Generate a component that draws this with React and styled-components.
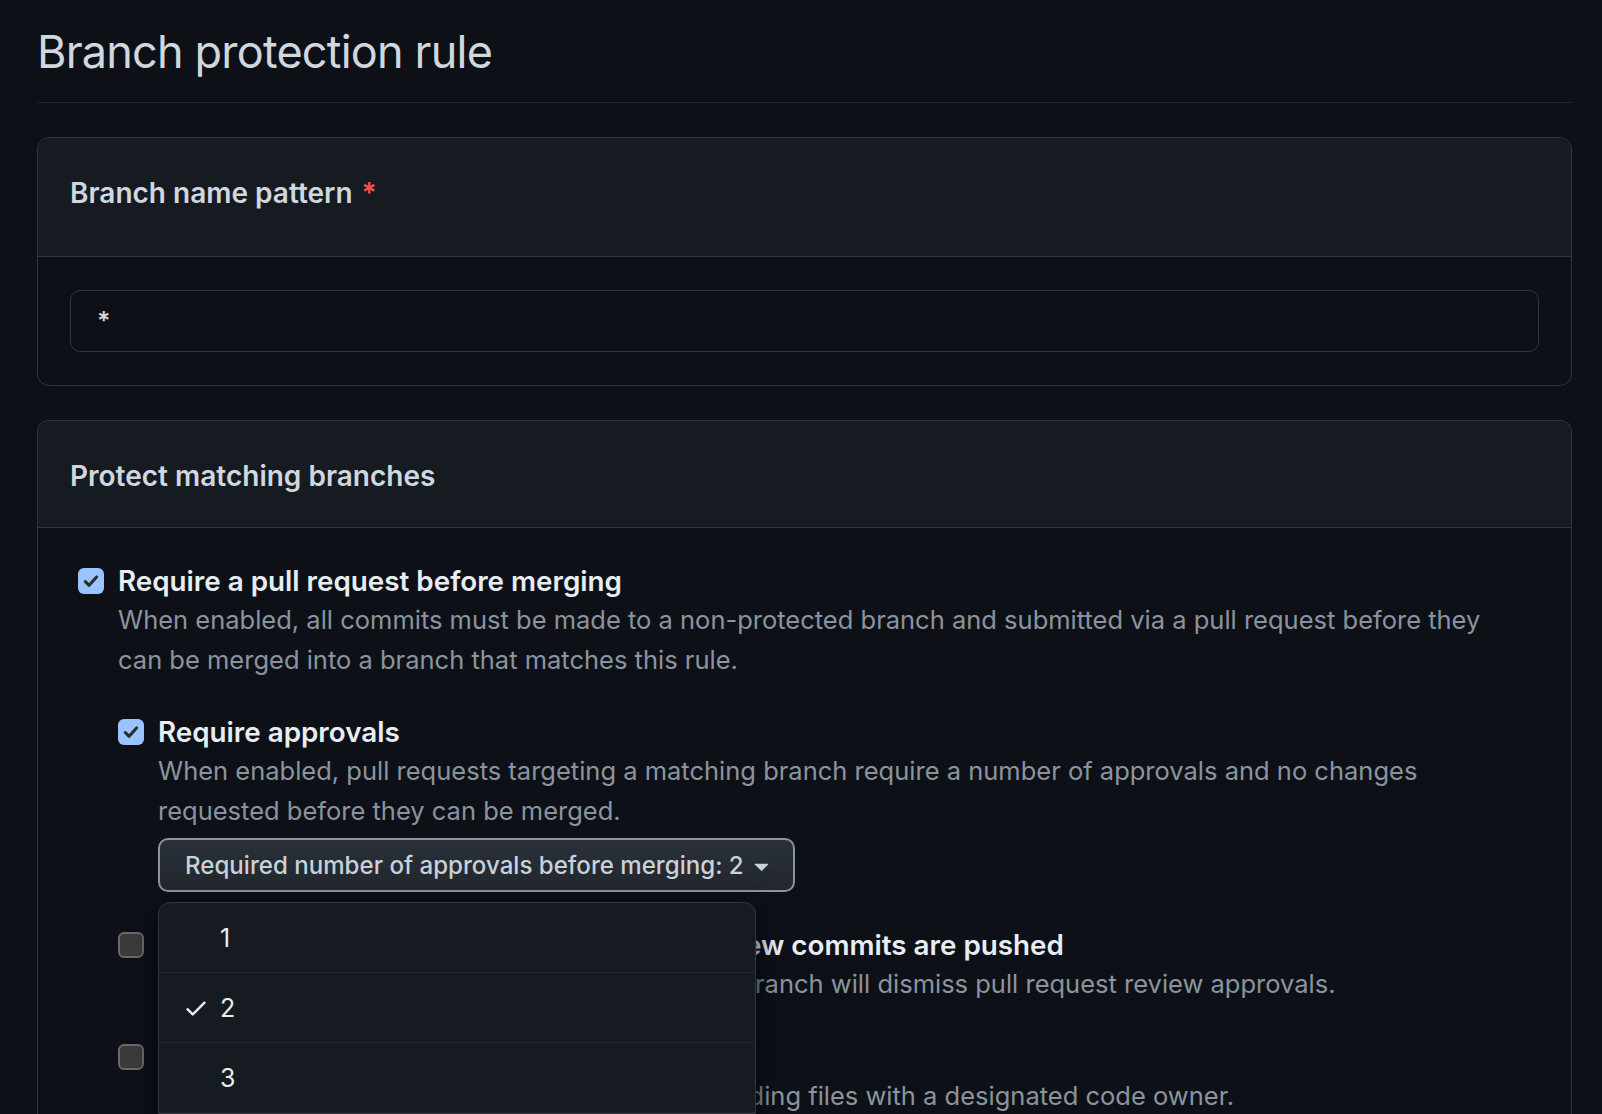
import styled, { createGlobalStyle } from "styled-components";

const GlobalStyle = createGlobalStyle`
  html, body {
    margin: 0;
    padding: 0;
    background: #0d1117;
  }
  body {
    font-family: Inter, "Noto Sans", "Liberation Sans", sans-serif;
    color: #c9d1d9;
    overflow: hidden;
  }
  * { box-sizing: border-box; }
`;

const Page = styled.div`
  width: 1602px;
  height: 1114px;
  padding: 22px 30px 0 37px;
  overflow: hidden;
`;

const Subhead = styled.div`
  padding-bottom: 20px;
  border-bottom: 1px solid #21262d;
  margin-bottom: 34px;
`;

const Title = styled.h1`
  margin: 0;
  font-size: 45px;
  line-height: 60px;
  font-weight: 400;
  letter-spacing: -0.8px;
  color: #d0d7de;
`;

const Box = styled.section`
  border: 1px solid #30363d;
  border-radius: 12px;
  margin-bottom: 34px;
  position: relative;
  ${(p) => p.$open && "border-bottom: none; border-bottom-left-radius: 0; border-bottom-right-radius: 0;"}
`;

const BoxHeader = styled.div`
  height: ${(p) => p.$height}px;
  padding: 0 32px 0 32px;
  padding-top: ${(p) => p.$top}px;
  background: #161b22;
  border-bottom: 1px solid #30363d;
  border-radius: 12px 12px 0 0;
`;

const BoxTitle = styled.h2`
  margin: 0;
  font-size: 28px;
  line-height: 40px;
  font-weight: 600;
  color: #d0d7de;
`;

const Required = styled.span`
  color: #f85149;
  margin-left: 9px;
`;

const BoxBody = styled.div`
  padding: ${(p) => p.$pad || "33px 32px"};
`;

const TextInput = styled.div`
  height: 62px;
  border: 1px solid #30363d;
  border-radius: 10px;
  background: #0d1117;
  padding: 0 26px;
  display: flex;
  align-items: center;
  font-size: 25px;
  font-weight: 600;
  color: #d0d7de;
`;

const Item = styled.div`
  display: flex;
  gap: 14px;
  margin-top: ${(p) => p.$gap || 0}px;
`;

const Check = styled.span`
  flex: 0 0 26px;
  width: 26px;
  height: 26px;
  margin-top: 8px;
  border-radius: 6px;
  display: flex;
  align-items: center;
  justify-content: center;
  background: ${(p) => (p.$on ? "#99c4ff" : "#3b3b3b")};
  border: ${(p) => (p.$on ? "none" : "2px solid #6a6a6a")};
`;

const ItemBody = styled.div`
  flex: 1;
  position: relative;
`;

const Label = styled.div`
  font-size: 27.8px;
  line-height: 40px;
  font-weight: 600;
  color: #e6edf3;
  padding-top: 1px;
  margin-bottom: -1px;
`;

const Note = styled.p`
  margin: 0;
  font-size: 25.5px;
  line-height: 40px;
  color: #8b949e;
`;

const SelectWrap = styled.div`
  position: relative;
  margin-top: 7px;
`;

const SelectButton = styled.button`
  height: 54px;
  padding: 0 24px 0 25px;
  display: inline-flex;
  align-items: center;
  gap: 10px;
  background: linear-gradient(#2a3038, #22272e);
  border: 2px solid #8b949e;
  border-radius: 10px;
  font-family: inherit;
  font-size: 24.1px;
  font-weight: 500;
  color: #c9d1d9;
`;

const Menu = styled.div`
  position: absolute;
  top: 64px;
  left: 0;
  width: 598px;
  background: #161b22;
  border: 1px solid #30363d;
  border-radius: 12px 12px 0 0;
  box-shadow: 0 8px 24px rgba(1, 4, 9, 0.85);
  z-index: 5;
`;

const MenuItem = styled.div`
  height: 70px;
  display: flex;
  align-items: center;
  padding-left: 24px;
  gap: 11px;
  border-bottom: 1px solid #21262d;
  font-size: 25px;
  color: #e6edf3;
`;

const Tick = styled.span`
  width: 26px;
  height: 26px;
  display: flex;
  align-items: center;
  justify-content: center;
`;

const CheckMark = () => (
  <svg width="18" height="18" viewBox="0 0 16 16">
    <path d="M3 8.6 6.3 11.8 13 4.4" fill="none" stroke="#2d2d2d" strokeWidth="2.8" strokeLinecap="round" strokeLinejoin="round" />
  </svg>
);

const Caret = () => (
  <svg width="16" height="16" viewBox="4 4 8 8" style={{ width: 15, height: 15 }}>
    <path d="m4.427 7.427 3.396 3.396a.25.25 0 0 0 .354 0l3.396-3.396A.25.25 0 0 0 11.396 7H4.604a.25.25 0 0 0-.177.427Z" fill="#c9d1d9" />
  </svg>
);

const ThinCheck = () => (
  <svg width="26" height="26" viewBox="0 0 16 16">
    <path d="M13.78 4.22a.75.75 0 0 1 0 1.06l-7.25 7.25a.75.75 0 0 1-1.06 0L2.22 9.28a.751.751 0 0 1 .018-1.042.751.751 0 0 1 1.042-.018L6 10.94l6.72-6.72a.75.75 0 0 1 1.06 0Z" fill="#e6edf3" />
  </svg>
);

const options = [1, 2, 3];

export default function App() {
  return (
    <>
      <GlobalStyle />
      <Page>
        <Subhead>
          <Title>Branch protection rule</Title>
        </Subhead>

        <Box>
          <BoxHeader $height={119} $top={35}>
            <BoxTitle>
              Branch name pattern<Required>*</Required>
            </BoxTitle>
          </BoxHeader>
          <BoxBody>
            <TextInput>*</TextInput>
          </BoxBody>
        </Box>

        <Box $open>
          <BoxHeader $height={107} $top={35}>
            <BoxTitle>Protect matching branches</BoxTitle>
          </BoxHeader>
          <BoxBody $pad="32px 62px 0 40px">
            <Item>
              <Check $on>
                <CheckMark />
              </Check>
              <ItemBody>
                <Label>Require a pull request before merging</Label>
                <Note>
                  When enabled, all commits must be made to a non-protected branch and submitted via a pull request before they
                  can be merged into a branch that matches this rule.
                </Note>

                <Item $gap={31}>
                  <Check $on>
                    <CheckMark />
                  </Check>
                  <ItemBody>
                    <Label>Require approvals</Label>
                    <Note>
                      When enabled, pull requests targeting a matching branch require a number of approvals and no changes
                      requested before they can be merged.
                    </Note>
                    <SelectWrap>
                      <SelectButton>
                        Required number of approvals before merging: 2
                        <Caret />
                      </SelectButton>
                      <Menu>
                        {options.map((n) => (
                          <MenuItem key={n}>
                            <Tick>{n === 2 && <ThinCheck />}</Tick>
                            {n}
                          </MenuItem>
                        ))}
                      </Menu>
                    </SelectWrap>
                  </ItemBody>
                </Item>

                <Item $gap={32}>
                  <Check />
                  <ItemBody>
                    <Label>Dismiss stale pull request approvals when new commits are pushed</Label>
                    <Note>New, reviewable commits pushed to a matching branch will dismiss pull request review approvals.</Note>
                  </ItemBody>
                </Item>

                <Item $gap={32}>
                  <Check />
                  <ItemBody>
                    <Label>Require review from Code Owners</Label>
                    <Note>Require an approved review in pull requests including files with a designated code owner.</Note>
                  </ItemBody>
                </Item>
              </ItemBody>
            </Item>
          </BoxBody>
        </Box>
      </Page>
    </>
  );
}
